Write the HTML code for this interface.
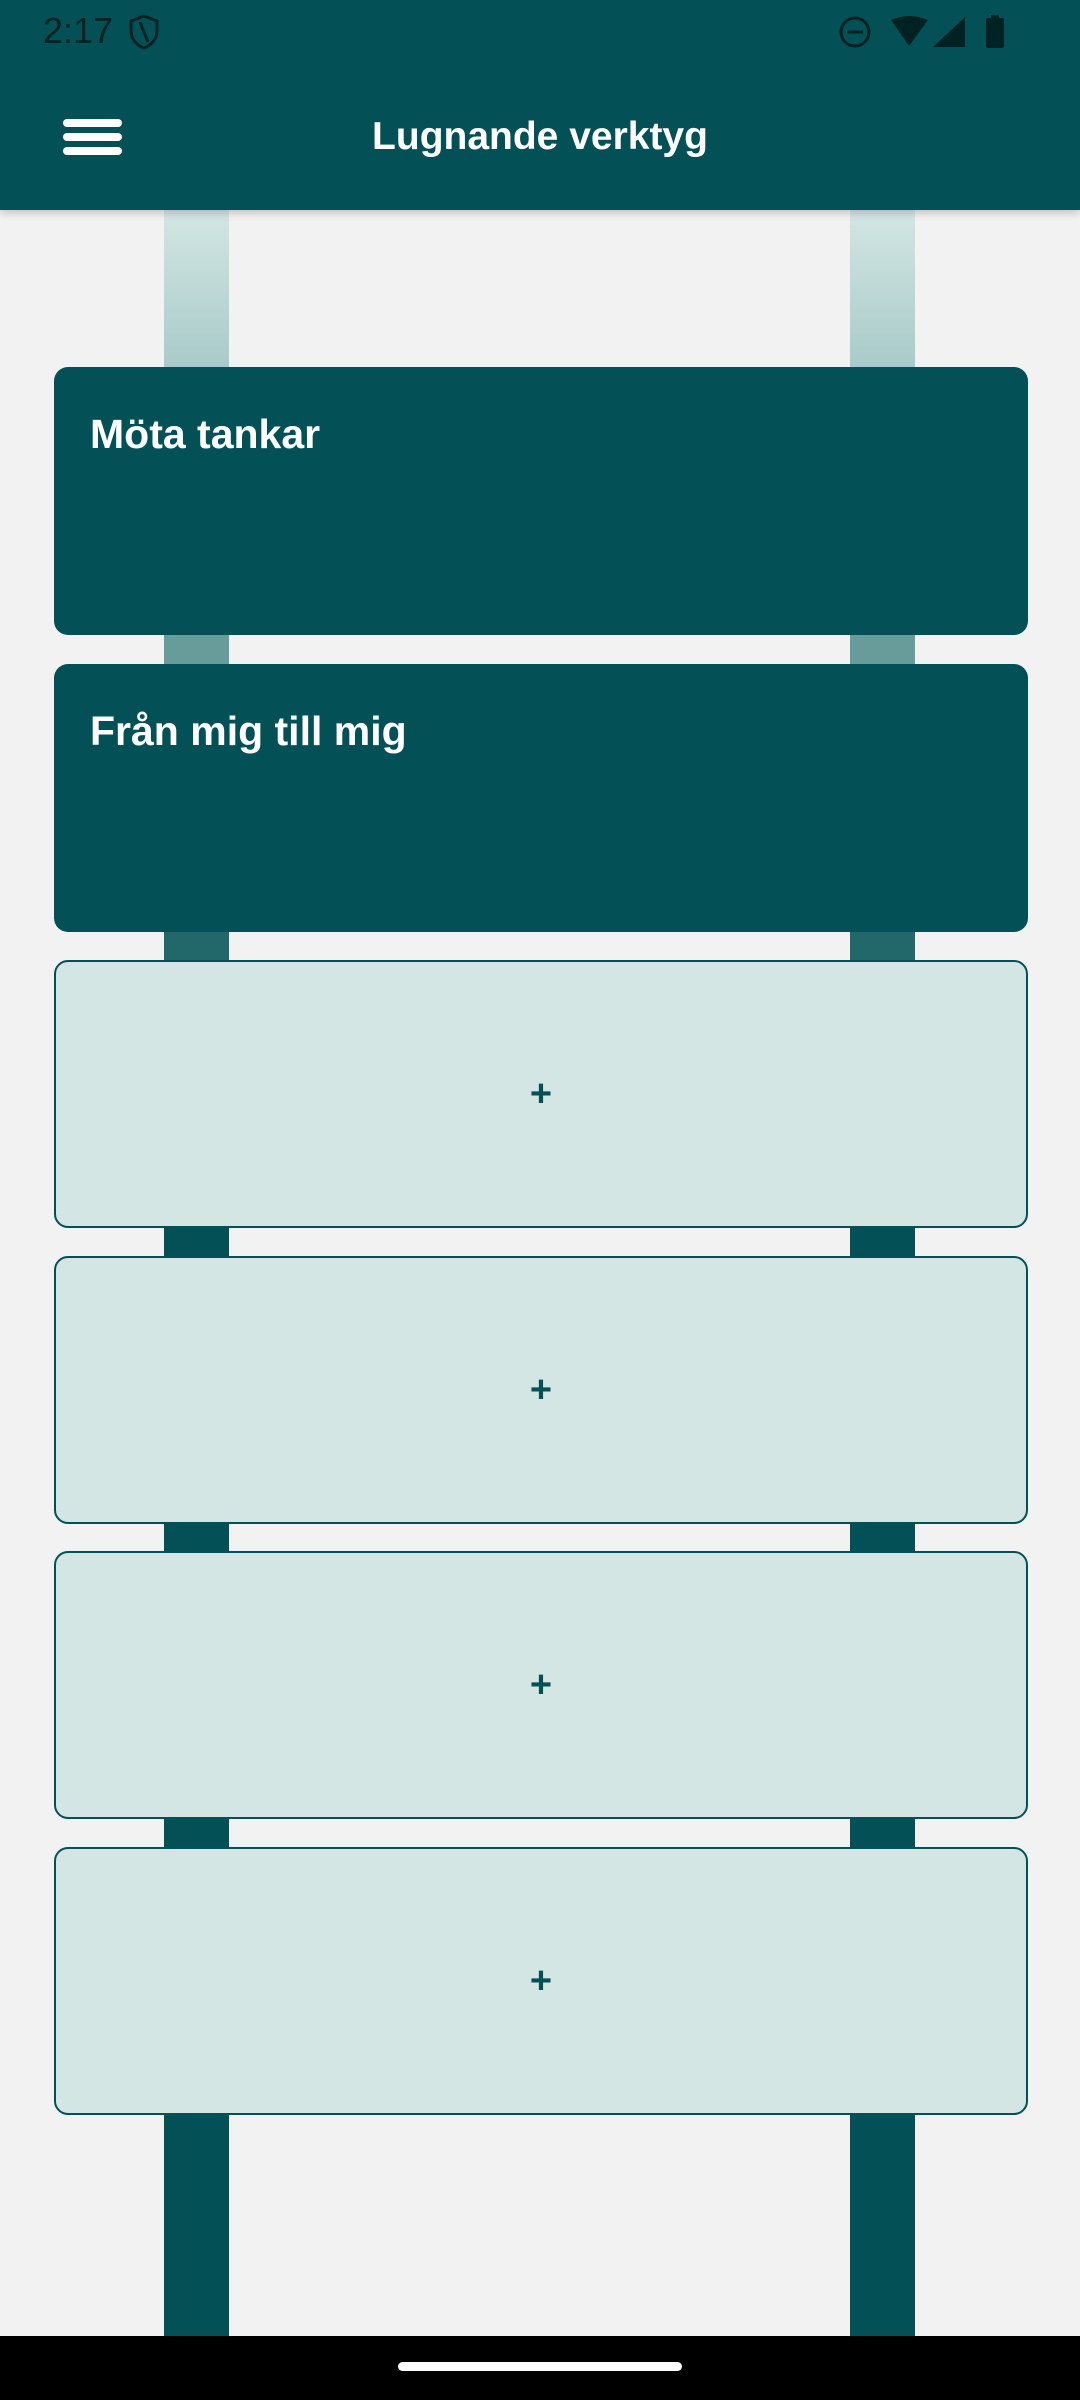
<!DOCTYPE html>
<html><head><meta charset="utf-8"><style>
*{margin:0;padding:0;box-sizing:border-box}
body{width:1080px;height:2400px;background:#f2f2f2;position:relative;overflow:hidden;font-family:"Liberation Sans",sans-serif}
.bar{position:absolute;left:0;top:0;width:1080px;height:210px;background:#035156;box-shadow:0 3px 8px rgba(0,0,0,.2);z-index:3}
.time{position:absolute;left:43px;top:10px;font-size:36px;color:#002222}
.title{position:absolute;left:0;width:1080px;top:115px;text-align:center;color:#fff;font-weight:bold;font-size:39px}
.ham{position:absolute;left:63px;width:59px;height:8px;border-radius:4px;background:#fff}
.rail{position:absolute;width:65px}
.card{position:absolute;left:54px;width:974px;height:268px;border-radius:14px}
.dark{background:#035156;color:#fff;font-weight:bold;font-size:41px;padding:44px 0 0 36px}
.light{background:#d3e6e4;border:2px solid #035156;color:#035156;font-weight:bold;font-size:38px;display:flex;align-items:center;justify-content:center}
.nav{position:absolute;left:0;top:2336px;width:1080px;height:64px;background:#000}
.handle{position:absolute;left:398px;top:2362px;width:284px;height:9px;border-radius:5px;background:#fff}
</style></head><body>
<div class="bar">
<div class="time">2:17</div>
<svg style="position:absolute;left:128px;top:14px" width="32" height="36" viewBox="0 0 32 36"><path d="M16 2 L29 7 V17 C29 26 22 32 16 34 C10 32 3 26 3 17 V7 Z" fill="none" stroke="#002222" stroke-width="3"/><path d="M12 8 L20 28" stroke="#002222" stroke-width="3"/></svg>
<svg style="position:absolute;left:836px;top:14px" width="180" height="36" viewBox="0 0 180 36">
<circle cx="19" cy="18" r="14" fill="none" stroke="#002222" stroke-width="3"/><rect x="11" y="16.5" width="16" height="3" fill="#002222"/>
<path d="M55 6 Q73 -2 92 6 L73 32 Z" fill="#002222"/>
<path d="M129 3 V33 H97 Z" fill="#002222"/>
<rect x="150" y="4" width="18" height="30" rx="2" fill="#002222"/><rect x="155" y="1" width="8" height="4" fill="#002222"/>
</svg>
<div class="ham" style="top:119px"></div><div class="ham" style="top:133px"></div><div class="ham" style="top:147px"></div>
<div class="title">Lugnande verktyg</div>
</div>
<div class="rail" style="left:164px;top:210px;height:157px;background:linear-gradient(#d3e6e3,#a8cbc9)"></div>
<div class="rail" style="left:850px;top:210px;height:157px;background:linear-gradient(#d3e6e3,#a8cbc9)"></div>
<div class="rail" style="left:164px;top:635px;height:30px;background:#679c9a"></div>
<div class="rail" style="left:850px;top:635px;height:30px;background:#679c9a"></div>
<div class="rail" style="left:164px;top:932px;height:30px;background:#22686a"></div>
<div class="rail" style="left:850px;top:932px;height:30px;background:#22686a"></div>
<div class="rail" style="left:164px;top:1227px;height:1110px;background:#035156"></div>
<div class="rail" style="left:850px;top:1227px;height:1110px;background:#035156"></div>
<div class="card dark" style="top:367px">Möta tankar</div>
<div class="card dark" style="top:664px">Från mig till mig</div>
<div class="card light" style="top:960px">+</div>
<div class="card light" style="top:1256px">+</div>
<div class="card light" style="top:1551px">+</div>
<div class="card light" style="top:1847px">+</div>
<div class="nav"></div><div class="handle"></div>
</body></html>
